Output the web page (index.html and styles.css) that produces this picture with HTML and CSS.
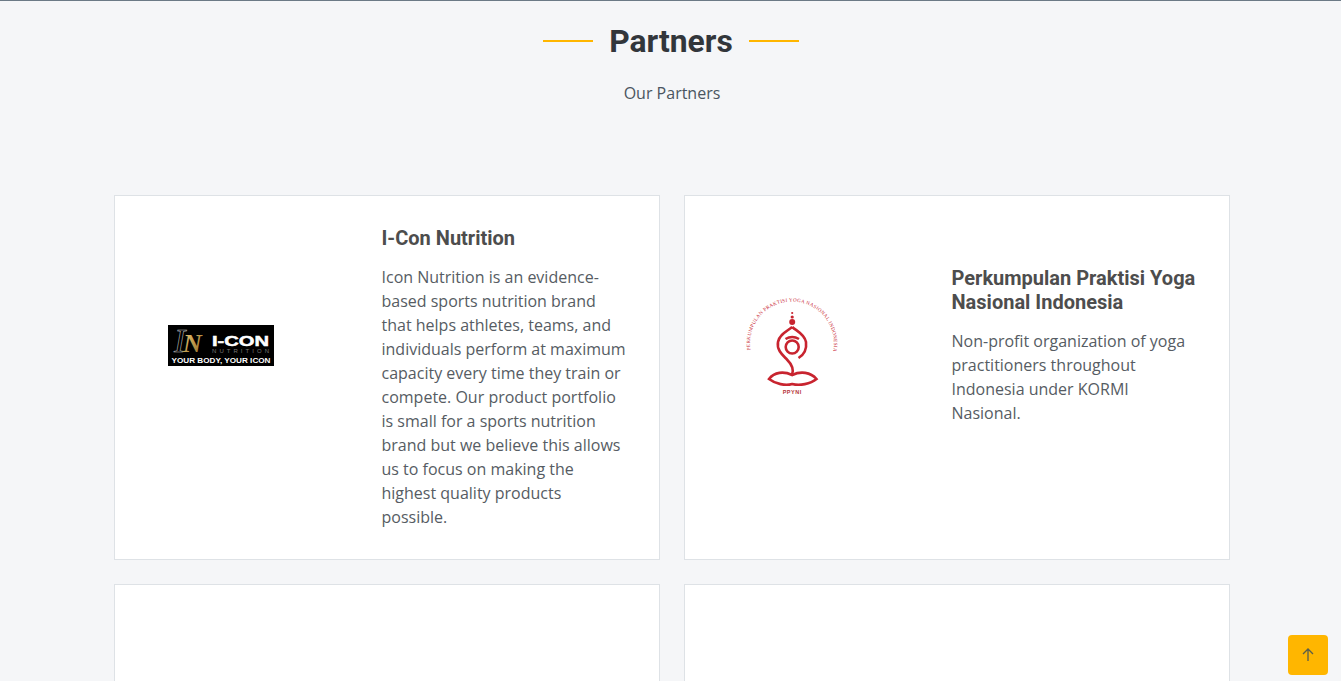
FILE: index.html
```html
<!DOCTYPE html>
<html>
<head>
<meta charset="utf-8">
<title>Partners</title>
<link rel="stylesheet" href="styles.css">
</head>
<body>
  <section class="partners">
    <div class="section-title">
      <h2><span>Partners</span></h2>
      <p>Our Partners</p>
    </div>

    <div class="partner-grid">
      <div class="partner-card">
        <div class="partner-logo">
          <svg width="106" height="41" viewBox="0 0 106 41">
            <defs>
              <linearGradient id="goldN" x1="0" y1="0" x2="1" y2="1">
                <stop offset="0" stop-color="#f2cf7a"/>
                <stop offset="1" stop-color="#8a6420"/>
              </linearGradient>
            </defs>
            <rect width="106" height="41" fill="#000"/>
            <text x="6" y="27" class="logo-i">I</text>
            <text x="15" y="27" class="logo-n" fill="url(#goldN)">N</text>
            <text x="44" y="21" class="logo-word" textLength="57" lengthAdjust="spacingAndGlyphs">I-CON</text>
            <text x="44" y="27.500" class="logo-nutrition" textLength="57">NUTRITION</text>
            <text x="3.5" y="37.500" class="logo-tag" textLength="99" lengthAdjust="spacingAndGlyphs">YOUR BODY, YOUR ICON</text>
          </svg>
        </div>
        <div class="partner-info">
          <h4>I-Con Nutrition</h4>
          <p>Icon Nutrition is an evidence-based sports nutrition brand that helps athletes, teams, and individuals perform at maximum capacity every time they train or compete. Our product portfolio is small for a sports nutrition brand but we believe this allows us to focus on making the highest quality products possible.</p>
        </div>
      </div>

      <div class="partner-card">
        <div class="partner-logo">
          <svg width="115" height="110" viewBox="-1.500 0 115 110">
            <defs>
              <path id="ppyniArc" d="M15 60 A42 42 0 1 1 98 60"/>
            </defs>
            <text class="ppyni-arc" textLength="146"><textPath href="#ppyniArc" textLength="146">PERKUMPULAN PRAKTISI YOGA NASIONAL INDONESIA</textPath></text>
            <g fill="#c8242f">
              <circle cx="56.700" cy="23" r="1.100"/>
              <circle cx="56.700" cy="27" r="1.600"/>
              <circle cx="56.700" cy="32" r="3"/>
            </g>
            <g class="ppyni-figure">
              <path d="M56.700 37 C52 41 44 44 42.500 52 C41 60 47 65 51 69 C56 74 59 79 56.500 85"/>
              <path d="M56.700 37 C61 41 69 44 70.500 52 C71.500 60 68 65 63 68"/>
              <circle cx="56.700" cy="57" r="6.500"/>
              <path d="M50 49 Q56.700 45 63.500 49"/>
              <path d="M56.700 85 C48 81 39 82 33.500 89 C40 94 50 96 56.700 94 C64 96 75 94 81 89 C75 82 65 81 56.700 85 Z"/>
            </g>
            <text x="56.700" y="104" class="ppyni-name">PPYNI</text>
          </svg>
        </div>
        <div class="partner-info partner-info-low">
          <h4>Perkumpulan Praktisi Yoga Nasional Indonesia</h4>
          <p>Non-profit organization of yoga practitioners throughout Indonesia under KORMI Nasional.</p>
        </div>
      </div>

      <div class="partner-card partner-card-empty"></div>
      <div class="partner-card partner-card-empty"></div>
    </div>
  </section>

  <a class="back-to-top" href="#">
    <svg width="16" height="16" viewBox="0 0 16 16">
      <path d="M8 14V2.500M3 7l5-5 5 5" fill="none" stroke="#5b5f4a" stroke-width="1.300"/>
    </svg>
  </a>
</body>
</html>
```

FILE: styles.css
```css
html, body {
  height: 100%;
  overflow: hidden;
}

body {
  margin: 0;
  background-color: #f5f6f8;
  border-top: 1px solid #6c7a86;
  box-sizing: border-box;
  font-family: "Open Sans", sans-serif;
  font-size: 16px;
  color: #444;
}

.partners {
  padding-left: 3px;
}

.section-title {
  text-align: center;
  height: 194px;
}

.section-title h2 {
  margin: 0;
  padding: 21px 2px 0 0;
  display: flex;
  justify-content: center;
  align-items: center;
  gap: 16px;
  font-family: Roboto, sans-serif;
  font-size: 31.800px;
  font-weight: 700;
  line-height: 38px;
  color: #32363b;
}

.section-title h2::before,
.section-title h2::after {
  content: "";
  width: 50px;
  height: 2px;
  background-color: #ffb600;
}

.section-title p {
  margin: 21px 0 0;
  line-height: 24px;
  color: #4a5560;
}

.partner-grid {
  width: 1116px;
  margin: 0 auto;
  display: grid;
  grid-template-columns: 546px 546px;
  gap: 24px;
}

.partner-card {
  display: flex;
  box-sizing: border-box;
  background-color: #fff;
  border: 1px solid #dee2e6;
  min-height: 365px;
}

.partner-logo {
  width: 212px;
  height: 298px;
  flex: none;
  display: flex;
  align-items: center;
  justify-content: center;
}

.partner-info {
  margin-left: 54.500px;
  padding: 30px 30px 30px 0;
  flex: 1;
}

.partner-info-low {
  padding-top: 70px;
}

.partner-info h4 {
  margin: 0 0 15px;
  font-family: Roboto, sans-serif;
  font-size: 20px;
  font-weight: 700;
  line-height: 24px;
  color: #4d4d4d;
}

.partner-info p {
  margin: 0;
  line-height: 24px;
  color: #565c63;
}

/* logos */
.logo-i {
  font-family: "Liberation Serif", serif;
  font-style: italic;
  font-size: 34px;
  fill: none;
  stroke: #bbb;
  stroke-width: 0.6;
}

.logo-n {
  font-family: "Liberation Serif", serif;
  font-style: italic;
  font-weight: 700;
  font-size: 26px;
}

.logo-word {
  font-family: "Liberation Sans", sans-serif;
  font-weight: 700;
  font-size: 15px;
  fill: #fff;
  stroke: #fff;
  stroke-width: 0.5;
}

.logo-nutrition {
  font-family: "Liberation Sans", sans-serif;
  font-size: 6px;
  fill: #777;
}

.logo-tag {
  font-family: "Liberation Sans", sans-serif;
  font-weight: 700;
  font-size: 6.500px;
  fill: #fff;
}

.ppyni-arc {
  font-family: "Liberation Serif", serif;
  font-size: 5px;
  fill: #c8242f;
}

.ppyni-figure {
  fill: none;
  stroke: #c8242f;
  stroke-width: 2.600;
}

.ppyni-name {
  font-family: "Liberation Sans", sans-serif;
  font-weight: 700;
  font-size: 5.500px;
  letter-spacing: 0.5px;
  text-anchor: middle;
  fill: #b5343a;
}

.back-to-top {
  position: fixed;
  right: 13px;
  bottom: 6px;
  width: 40px;
  height: 40px;
  border-radius: 4px;
  background-color: #ffb600;
  display: flex;
  align-items: center;
  justify-content: center;
}
```
